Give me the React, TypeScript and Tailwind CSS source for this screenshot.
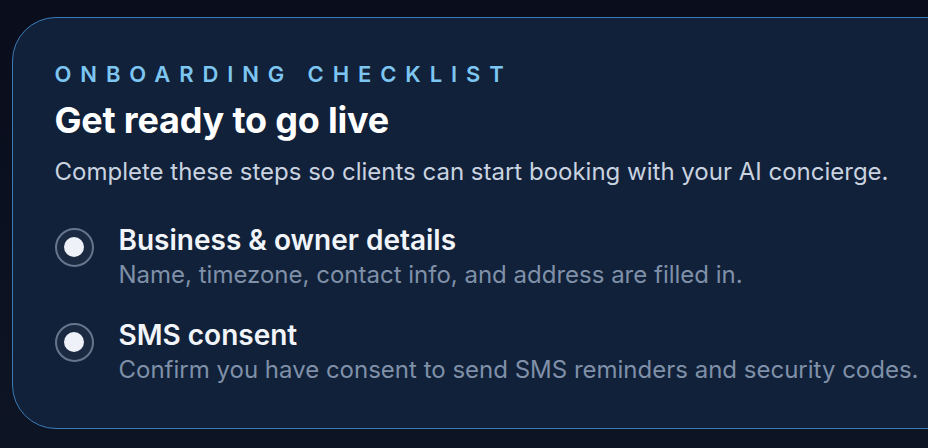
export default function App() {
  const steps = [
    {
      title: "Business & owner details",
      desc: "Name, timezone, contact info, and address are filled in.",
    },
    {
      title: "SMS consent",
      desc: "Confirm you have consent to send SMS reminders and security codes.",
    },
  ];

  return (
    <div
      className="w-[928px] h-[448px] overflow-hidden bg-gradient-to-b from-[#090d1c] to-[#0d1424] pt-[17px] pl-[12px]"
      style={{ fontFamily: "Inter, 'Noto Sans', sans-serif" }}
    >
      <div className="w-[980px] h-[412px] rounded-[44px] border-[1.5px] border-[#3b7cb8] bg-[#112139] pl-[41.5px] pt-[41.5px]">
        <p className="text-[22px] leading-[28px] font-semibold tracking-[8.9px] text-[#7ec6f2]">
          ONBOARDING CHECKLIST
        </p>
        <h1 className="mt-[10px] text-[36px] leading-[44px] font-bold tracking-[-0.2px] text-white">
          Get ready to go live
        </h1>
        <p className="mt-[14px] text-[24px] leading-[32px] text-[#c9d3e0]">
          Complete these steps so clients can start booking with your AI concierge.
        </p>

        <ul className="mt-[34px] flex flex-col gap-[26px]">
          {steps.map((s) => (
            <li key={s.title} className="flex items-start gap-[25px]">
              <span className="mt-[6px] flex h-[39px] w-[39px] shrink-0 items-center justify-center rounded-full border-2 border-[#66758c] bg-[#1b2a41]">
                <span className="h-[20px] w-[20px] rounded-full bg-[#eef2f8]" />
              </span>
              <div>
                <p className="text-[28px] leading-[36px] font-semibold text-[#f1f5f9]">{s.title}</p>
                <p className="mt-[1px] text-[24px] leading-[32px] text-[#7f90a8]">{s.desc}</p>
              </div>
            </li>
          ))}
        </ul>
      </div>
    </div>
  );
}
